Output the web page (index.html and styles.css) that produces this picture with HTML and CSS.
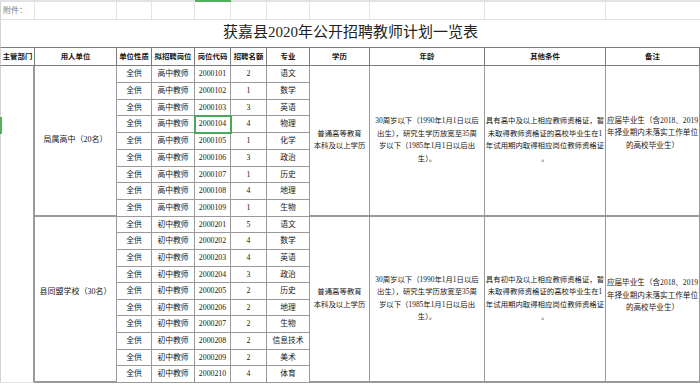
FILE: index.html
```html
<!DOCTYPE html>
<html lang="zh-CN">
<head>
<meta charset="utf-8">
<title>获嘉县2020年公开招聘教师计划一览表</title>
<link rel="stylesheet" href="styles.css">
</head>
<body>
<div class="sheet">
  <div class="colbar"><span class="cb-pre"></span><span class="cb-sel"></span></div>
  <div class="grid">
    <div class="cell blank note c1">附件：</div>
    <div class="cell blank"></div><div class="cell blank"></div><div class="cell blank"></div><div class="cell blank"></div><div class="cell blank"></div><div class="cell blank"></div><div class="cell blank"></div><div class="cell blank"></div><div class="cell blank"></div><div class="cell blank last"></div>

    <div class="cell title c1">获嘉县2020年公开招聘教师计划一览表</div>

    <div class="cell hd c1">主管部门</div>
    <div class="cell hd">用人单位</div>
    <div class="cell hd">单位性质</div>
    <div class="cell hd">拟招聘岗位</div>
    <div class="cell hd">岗位代码</div>
    <div class="cell hd">招聘名额</div>
    <div class="cell hd">专业</div>
    <div class="cell hd">学历</div>
    <div class="cell hd">年龄</div>
    <div class="cell hd">其他条件</div>
    <div class="cell hd">备注</div>

    <!-- group 1 -->
    <div class="cell dept c1 span19"></div>
    <div class="cell unit span9">局属高中（20名）</div>
    <div class="cell">全供</div><div class="cell">高中教师</div><div class="cell">2000101</div><div class="cell">2</div><div class="cell">语文</div>
    <div class="cell multi span9">普通高等教育<br>本科及以上学历</div>
    <div class="cell multi span9">30周岁以下（1990年1月1日以后<br>出生），研究生学历放宽至35周<br>岁以下（1985年1月1日以后出<br>生）。</div>
    <div class="cell multi span9">具有高中及以上相应教师资格证，暂<br>未取得教师资格证的高校毕业生在1<br>年试用期内取得相应岗位教师资格证<br>。</div>
    <div class="cell multi note1 span9">应届毕业生（含2018、2019<br>年择业期内未落实工作单位<br>的高校毕业生）</div>

    <div class="cell">全供</div><div class="cell">高中教师</div><div class="cell">2000102</div><div class="cell">1</div><div class="cell">数学</div>
    <div class="cell">全供</div><div class="cell">高中教师</div><div class="cell">2000103</div><div class="cell">3</div><div class="cell">英语</div>
    <div class="cell">全供</div><div class="cell">高中教师</div><div class="cell sel">2000104</div><div class="cell">4</div><div class="cell">物理</div>
    <div class="cell">全供</div><div class="cell">高中教师</div><div class="cell">2000105</div><div class="cell">1</div><div class="cell">化学</div>
    <div class="cell">全供</div><div class="cell">高中教师</div><div class="cell">2000106</div><div class="cell">3</div><div class="cell">政治</div>
    <div class="cell">全供</div><div class="cell">高中教师</div><div class="cell">2000107</div><div class="cell">1</div><div class="cell">历史</div>
    <div class="cell">全供</div><div class="cell">高中教师</div><div class="cell">2000108</div><div class="cell">4</div><div class="cell">地理</div>
    <div class="cell">全供</div><div class="cell">高中教师</div><div class="cell">2000109</div><div class="cell">1</div><div class="cell">生物</div>

    <!-- group 2 -->
    <div class="cell unit unit2 span10">县同盟学校（30名）</div>
    <div class="cell">全供</div><div class="cell">初中教师</div><div class="cell">2000201</div><div class="cell">5</div><div class="cell">语文</div>
    <div class="cell multi span10">普通高等教育<br>本科及以上学历</div>
    <div class="cell multi span10">30周岁以下（1990年1月1日以后<br>出生），研究生学历放宽至35周<br>岁以下（1985年1月1日以后出<br>生）。</div>
    <div class="cell multi span10">具有初中及以上相应教师资格证，暂<br>未取得教师资格证的高校毕业生在1<br>年试用期内取得相应岗位教师资格证<br>。</div>
    <div class="cell multi note2 span10">应届毕业生（含2018、2019<br>年择业期内未落实工作单位<br>的高校毕业生）</div>

    <div class="cell">全供</div><div class="cell">初中教师</div><div class="cell">2000202</div><div class="cell">4</div><div class="cell">数学</div>
    <div class="cell">全供</div><div class="cell">初中教师</div><div class="cell">2000203</div><div class="cell">4</div><div class="cell">英语</div>
    <div class="cell">全供</div><div class="cell">初中教师</div><div class="cell">2000204</div><div class="cell">3</div><div class="cell">政治</div>
    <div class="cell">全供</div><div class="cell">初中教师</div><div class="cell">2000205</div><div class="cell">2</div><div class="cell">历史</div>
    <div class="cell">全供</div><div class="cell">初中教师</div><div class="cell">2000206</div><div class="cell">2</div><div class="cell">地理</div>
    <div class="cell">全供</div><div class="cell">初中教师</div><div class="cell">2000207</div><div class="cell">2</div><div class="cell">生物</div>
    <div class="cell">全供</div><div class="cell">初中教师</div><div class="cell">2000208</div><div class="cell">2</div><div class="cell">信息技术</div>
    <div class="cell">全供</div><div class="cell">初中教师</div><div class="cell">2000209</div><div class="cell">2</div><div class="cell">美术</div>
    <div class="cell">全供</div><div class="cell">初中教师</div><div class="cell">2000210</div><div class="cell">4</div><div class="cell">体育</div>
  </div>
  <span class="rowmark"></span>
</div>
</body>
</html>
```

FILE: styles.css
```css
* {
  box-sizing: border-box;
  margin: 0;
  padding: 0;
}

html, body {
  background: #ffffff;
}

body {
  font-family: "Liberation Serif", "Noto Sans CJK SC", serif;
  color: #161616;
}

.sheet {
  position: relative;
  width: 700px;
  height: 386px;
  overflow: hidden;
}

.colbar {
  display: flex;
  height: 2px;
  background: #e2e2e2;
}

.cb-pre {
  width: 195px;
}

.cb-sel {
  width: 36px;
  background: #52b05e;
}

.grid {
  display: grid;
  grid-template-columns: 35px 82px 35px 43px 36px 36px 43px 60px 115px 121px 94px;
  grid-template-rows: 18px 28px 18px repeat(9, 16.78px) repeat(10, 16.6px);
}

.cell {
  display: flex;
  align-items: center;
  justify-content: center;
  text-align: center;
  white-space: nowrap;
  overflow: hidden;
  font-size: 7.8px;
  line-height: 1;
  border-right: 1px solid #9a9a9a;
  border-bottom: 1px solid #9a9a9a;
}

.c1 {
  border-left: 1px solid #d4d4d4;
}

.blank {
  border-right-color: #e3e3e3;
  border-bottom-color: #e3e3e3;
}

.blank.last {
  border-right: none;
}

.note {
  justify-content: flex-start;
  padding-left: 2px;
  color: #7a7a7a;
  font-size: 8px;
}

.title {
  grid-column: 1 / -1;
  font-size: 15px;
  color: #222;
  border-right: none;
  border-bottom: 1px solid #7c7c7c;
  padding-bottom: 2px;
}

.hd {
  font-weight: bold;
  font-size: 7.4px;
  color: #111;
  border-right-color: #7c7c7c;
  border-bottom-color: #7c7c7c;
}

.span9 {
  grid-row: span 9;
}

.span10 {
  grid-row: span 10;
}

.span19 {
  grid-row: span 19;
}

.dept {
  border-right: 2px solid #999;
  border-bottom-color: #e3e3e3;
}

.unit {
  font-size: 8px;
  border-bottom: 2px solid #999;
}

.unit2 {
  padding-bottom: 14px;
}

.multi {
  white-space: nowrap;
  font-size: 7.4px;
  line-height: 12.6px;
  border-bottom: 2px solid #999;
}

.note1 {
  font-size: 7.6px;
  padding-bottom: 14px;
}

.note2 {
  font-size: 7.6px;
  padding-bottom: 6px;
}

.sel {
  position: relative;
  z-index: 1;
  outline: 2px solid #4aa85a;
  outline-offset: -1px;
}

.rowmark {
  position: absolute;
  left: 0;
  top: 117px;
  width: 2px;
  height: 17px;
  background: #52b05e;
}
```
